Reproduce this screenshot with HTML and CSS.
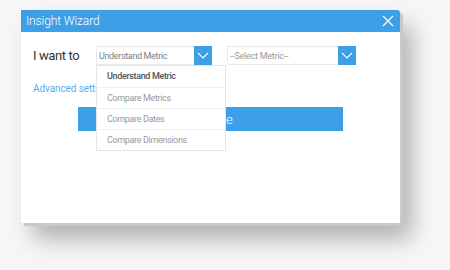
FILE: index.html
```html
<!DOCTYPE html>
<html>
<head>
<meta charset="utf-8">
<link rel="stylesheet" href="styles.css">
</head>
<body>
<div class="dialog">
  <div class="header">
    <span class="title">Insight Wizard</span>
    <svg class="close" width="12" height="12" viewBox="0 0 12 12"><path d="M1 1L11 11M11 1L1 11" stroke="#fff" stroke-width="1.2" fill="none"/></svg>
  </div>
  <div class="content">
    <div class="row">
      <span class="label">I want to</span>
      <div class="select s1">
        <span class="value">Understand Metric</span>
        <span class="btn"><svg width="12" height="7" viewBox="0 0 12 7"><path d="M1 1L6 6L11 1" stroke="#fff" stroke-width="1.1" fill="none"/></svg></span>
        <ul class="menu">
          <li class="active">Understand Metric</li>
          <li>Compare Metrics</li>
          <li>Compare Dates</li>
          <li>Compare Dimensions</li>
        </ul>
      </div>
      <div class="select s2">
        <span class="value">--Select Metric--</span>
        <span class="btn"><svg width="12" height="7" viewBox="0 0 12 7"><path d="M1 1L6 6L11 1" stroke="#fff" stroke-width="1.1" fill="none"/></svg></span>
      </div>
    </div>
    <a class="adv">Advanced settings</a>
    <div class="actions"><button class="go">Analyze</button></div>
  </div>
</div>
</body>
</html>
```
FILE: styles.css
```css
html, body { margin: 0; padding: 0; }
body {
  background: #f6f6f6;
  width: 450px;
  height: 270px;
  overflow: hidden;
  font-family: Roboto, "Liberation Sans", sans-serif;
  padding-top: 10px;
  box-sizing: border-box;
}
.dialog {
  margin-left: 21px;
  width: 379px;
  height: 213px;
  background: #fff;
  border-top-right-radius: 3px;
  box-shadow: 3px 3px 0 #c9c9c9, 12px 16px 22px rgba(0,0,0,0.28);
}
.header {
  height: 22px;
  background: #3c9fe7;
  border-top-right-radius: 3px;
  display: flex;
  align-items: center;
  justify-content: space-between;
  padding: 0 6px 0 5px;
}
.title {
  color: #fff;
  font-size: 12px;
  font-weight: 300;
  letter-spacing: -0.1px;
}
.close { display: block; }
.content {
  padding: 14px 0 0 12px;
}
.row {
  display: flex;
  align-items: center;
  height: 19px;
}
.label {
  width: 63px;
  font-size: 13px;
  color: #333;
  font-weight: 400;
  letter-spacing: -0.4px;
}
.select {
  position: relative;
  display: flex;
  align-items: center;
  height: 19px;
  border: 1px solid #eaeaea;
  border-right: none;
  box-sizing: border-box;
  background: #fff;
}
.s1 { width: 116px; }
.s2 { width: 129px; margin-left: 15px; }
.value {
  flex: 1;
  font-size: 9px;
  letter-spacing: -0.35px;
  color: #808080;
  padding-left: 2px;
  white-space: nowrap;
}
.s2 .value { color: #999; letter-spacing: -0.25px; }
.btn {
  width: 18px;
  height: 19px;
  margin-top: -1px;
  margin-bottom: -1px;
  background: #3c9fe7;
  display: flex;
  align-items: center;
  justify-content: center;
}
.btn svg { display: block; }
.menu {
  position: absolute;
  top: 18px;
  left: -1px;
  width: 130px;
  margin: 0;
  padding: 0;
  list-style: none;
  background: #fff;
  border: 1px solid #e6e6e6;
  box-sizing: border-box;
  z-index: 5;
}
.menu li {
  height: 21px;
  line-height: 20px;
  box-sizing: border-box;
  padding-left: 10px;
  font-size: 9px;
  letter-spacing: -0.35px;
  color: #999;
  border-top: 1px solid #efefef;
}
.menu li:first-child { border-top: none; line-height: 21px; }
.menu li.active { color: #555; font-weight: 500; }
.adv {
  display: block;
  margin-top: 18px;
  font-size: 10px;
  letter-spacing: -0.1px;
  color: #55aef0;
}
.actions {
  display: flex;
  justify-content: center;
  margin-left: -12px;
  margin-top: 13px;
}
.go {
  width: 265px;
  height: 24px;
  border: none;
  background: #3c9fe7;
  color: #fff;
  font-family: Roboto, "Liberation Sans", sans-serif;
  font-size: 13px;
  font-weight: 300;
  padding: 0;
}
```
